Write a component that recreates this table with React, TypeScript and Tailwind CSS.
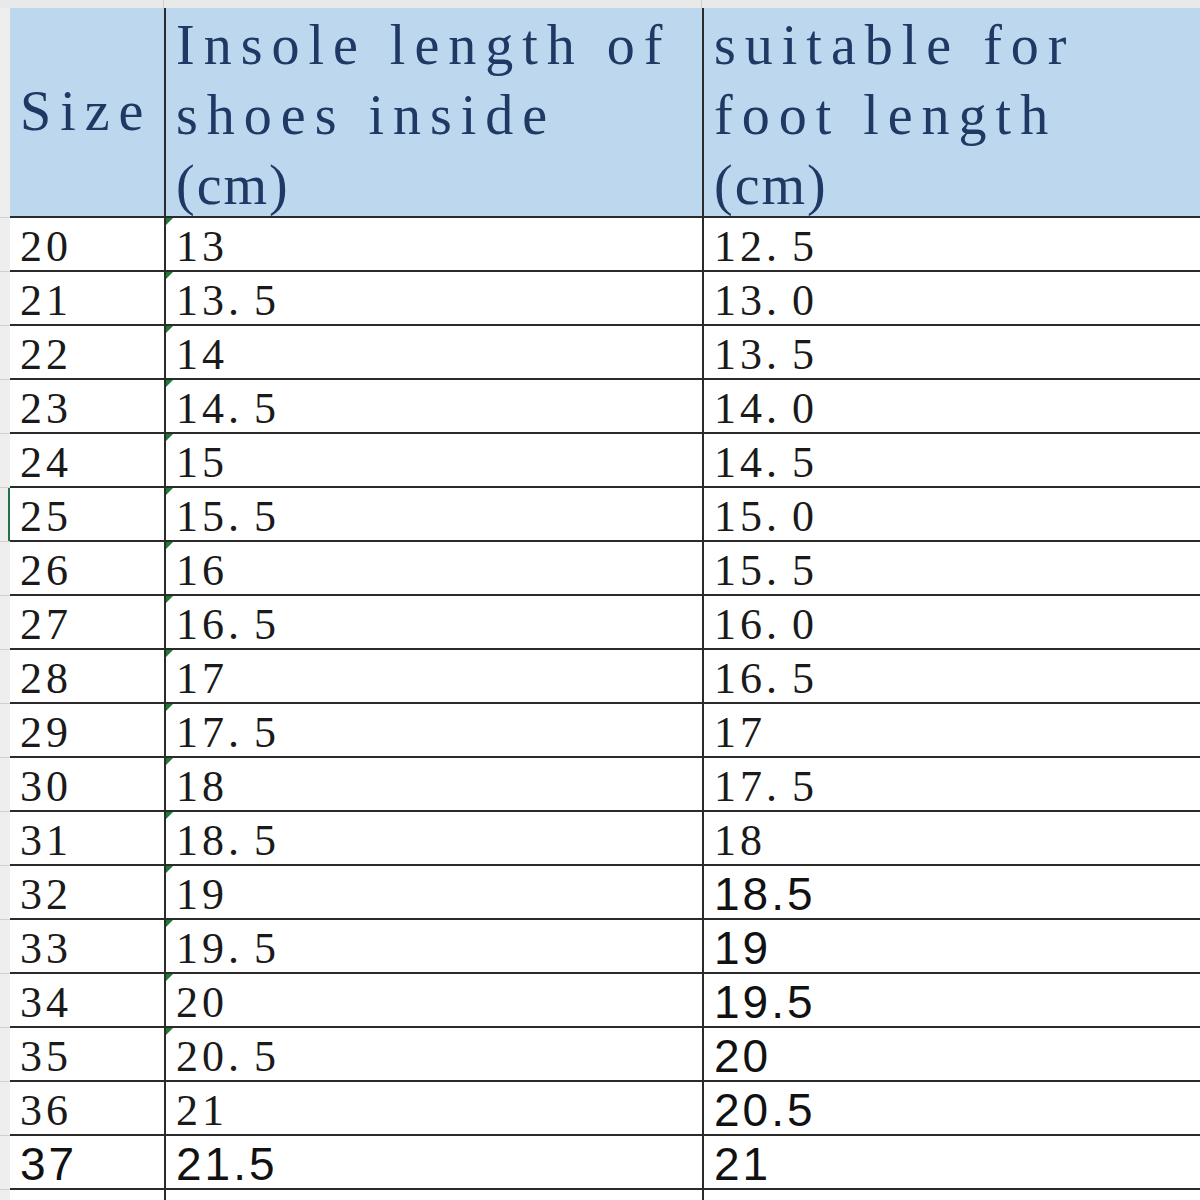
import React from 'react'

type Row = {
  size: string
  insole: string
  foot: string
  sansFoot?: boolean
  sansAll?: boolean
}

const rows: Row[] = [
  { size: '20', insole: '13', foot: '12.5' },
  { size: '21', insole: '13.5', foot: '13.0' },
  { size: '22', insole: '14', foot: '13.5' },
  { size: '23', insole: '14.5', foot: '14.0' },
  { size: '24', insole: '15', foot: '14.5' },
  { size: '25', insole: '15.5', foot: '15.0' },
  { size: '26', insole: '16', foot: '15.5' },
  { size: '27', insole: '16.5', foot: '16.0' },
  { size: '28', insole: '17', foot: '16.5' },
  { size: '29', insole: '17.5', foot: '17' },
  { size: '30', insole: '18', foot: '17.5' },
  { size: '31', insole: '18.5', foot: '18' },
  { size: '32', insole: '19', foot: '18.5', sansFoot: true },
  { size: '33', insole: '19.5', foot: '19', sansFoot: true },
  { size: '34', insole: '20', foot: '19.5', sansFoot: true },
  { size: '35', insole: '20.5', foot: '20', sansFoot: true },
  { size: '36', insole: '21', foot: '20.5', sansFoot: true },
  { size: '37', insole: '21.5', foot: '21', sansFoot: true, sansAll: true },
]

function Value({ text, sans }: { text: string; sans?: boolean }) {
  if (sans) {
    return (
      <span className="font-['Liberation_Sans'] text-[46px] leading-none tracking-[3px] text-[#111]">
        {text}
      </span>
    )
  }
  const [whole, frac] = text.split('.')
  return (
    <span className="font-['Liberation_Serif'] text-[44px] leading-none tracking-[4px] text-[#1a1a1a]">
      {whole}
      {frac !== undefined && (
        <>
          <span className="inline-block w-[26px]">.</span>
          {frac}
        </>
      )}
    </span>
  )
}

// little green "number stored as text" marker
function Flag() {
  return (
    <span className="absolute left-0 top-0 h-0 w-0 border-r-[7px] border-t-[7px] border-r-transparent border-t-[#1e7b34]" />
  )
}

const headCell =
  "bg-[#bdd7ee] pl-[10px] font-['Liberation_Serif'] text-[56px] leading-[70px] tracking-[9px] whitespace-nowrap text-[#1f3864]"

export default function App() {
  return (
    <div className="h-[1200px] w-[1200px] overflow-hidden bg-white">
      {/* column header strip */}
      <div className="grid h-[8px] grid-cols-[164px_538px_1fr] bg-[#e9e9e9]">
        <div className="border-r border-[#cfcfcf]" />
        <div className="border-r border-[#cfcfcf]" />
        <div />
      </div>

      <div className="grid grid-cols-[10px_154px_538px_1fr]">
        {/* header */}
        <div className="border-b border-[#d0d0d0] bg-[#eeeeee]" />
        <div className={`flex h-[210px] items-center border-b-2 border-[#2b2b2b] ${headCell}`}>
          <span className="pb-[2px]">Size</span>
        </div>
        <div className={`h-[210px] border-b-2 border-l-2 border-[#2b2b2b] pt-[2px] ${headCell}`}>
          Insole length of
          <br />
          shoes inside
          <br />
          <span className="tracking-[2px]">(cm)</span>
        </div>
        <div className={`h-[210px] border-b-2 border-l-2 border-[#2b2b2b] pt-[2px] ${headCell}`}>
          suitable for
          <br />
          foot length
          <br />
          <span className="tracking-[2px]">(cm)</span>
        </div>

        {rows.map((r, i) => (
          <React.Fragment key={r.size}>
            <div
              className={
                i === 5
                  ? 'border-b border-[#d0d0d0] bg-[#eeeeee] shadow-[inset_-2px_0_0_#217346]'
                  : 'border-b border-[#d0d0d0] bg-[#eeeeee]'
              }
            />
            <div className="flex h-[54px] items-end border-b-2 border-[#2b2b2b] pb-[1px] pl-[10px]">
              <Value text={r.size} sans={r.sansAll} />
            </div>
            <div className="relative flex h-[54px] items-end border-b-2 border-l-2 border-[#2b2b2b] pb-[1px] pl-[10px]">
              {!r.sansAll && i !== 16 && <Flag />}
              <Value text={r.insole} sans={r.sansAll} />
            </div>
            <div className="flex h-[54px] items-end border-b-2 border-l-2 border-[#2b2b2b] pb-[1px] pl-[10px]">
              <Value text={r.foot} sans={r.sansFoot} />
            </div>
          </React.Fragment>
        ))}

        <div className="h-[40px] bg-[#eeeeee]" />
        <div className="h-[40px]" />
        <div className="h-[40px] border-l-2 border-[#2b2b2b]" />
        <div className="h-[40px] border-l-2 border-[#2b2b2b]" />
      </div>
    </div>
  )
}
